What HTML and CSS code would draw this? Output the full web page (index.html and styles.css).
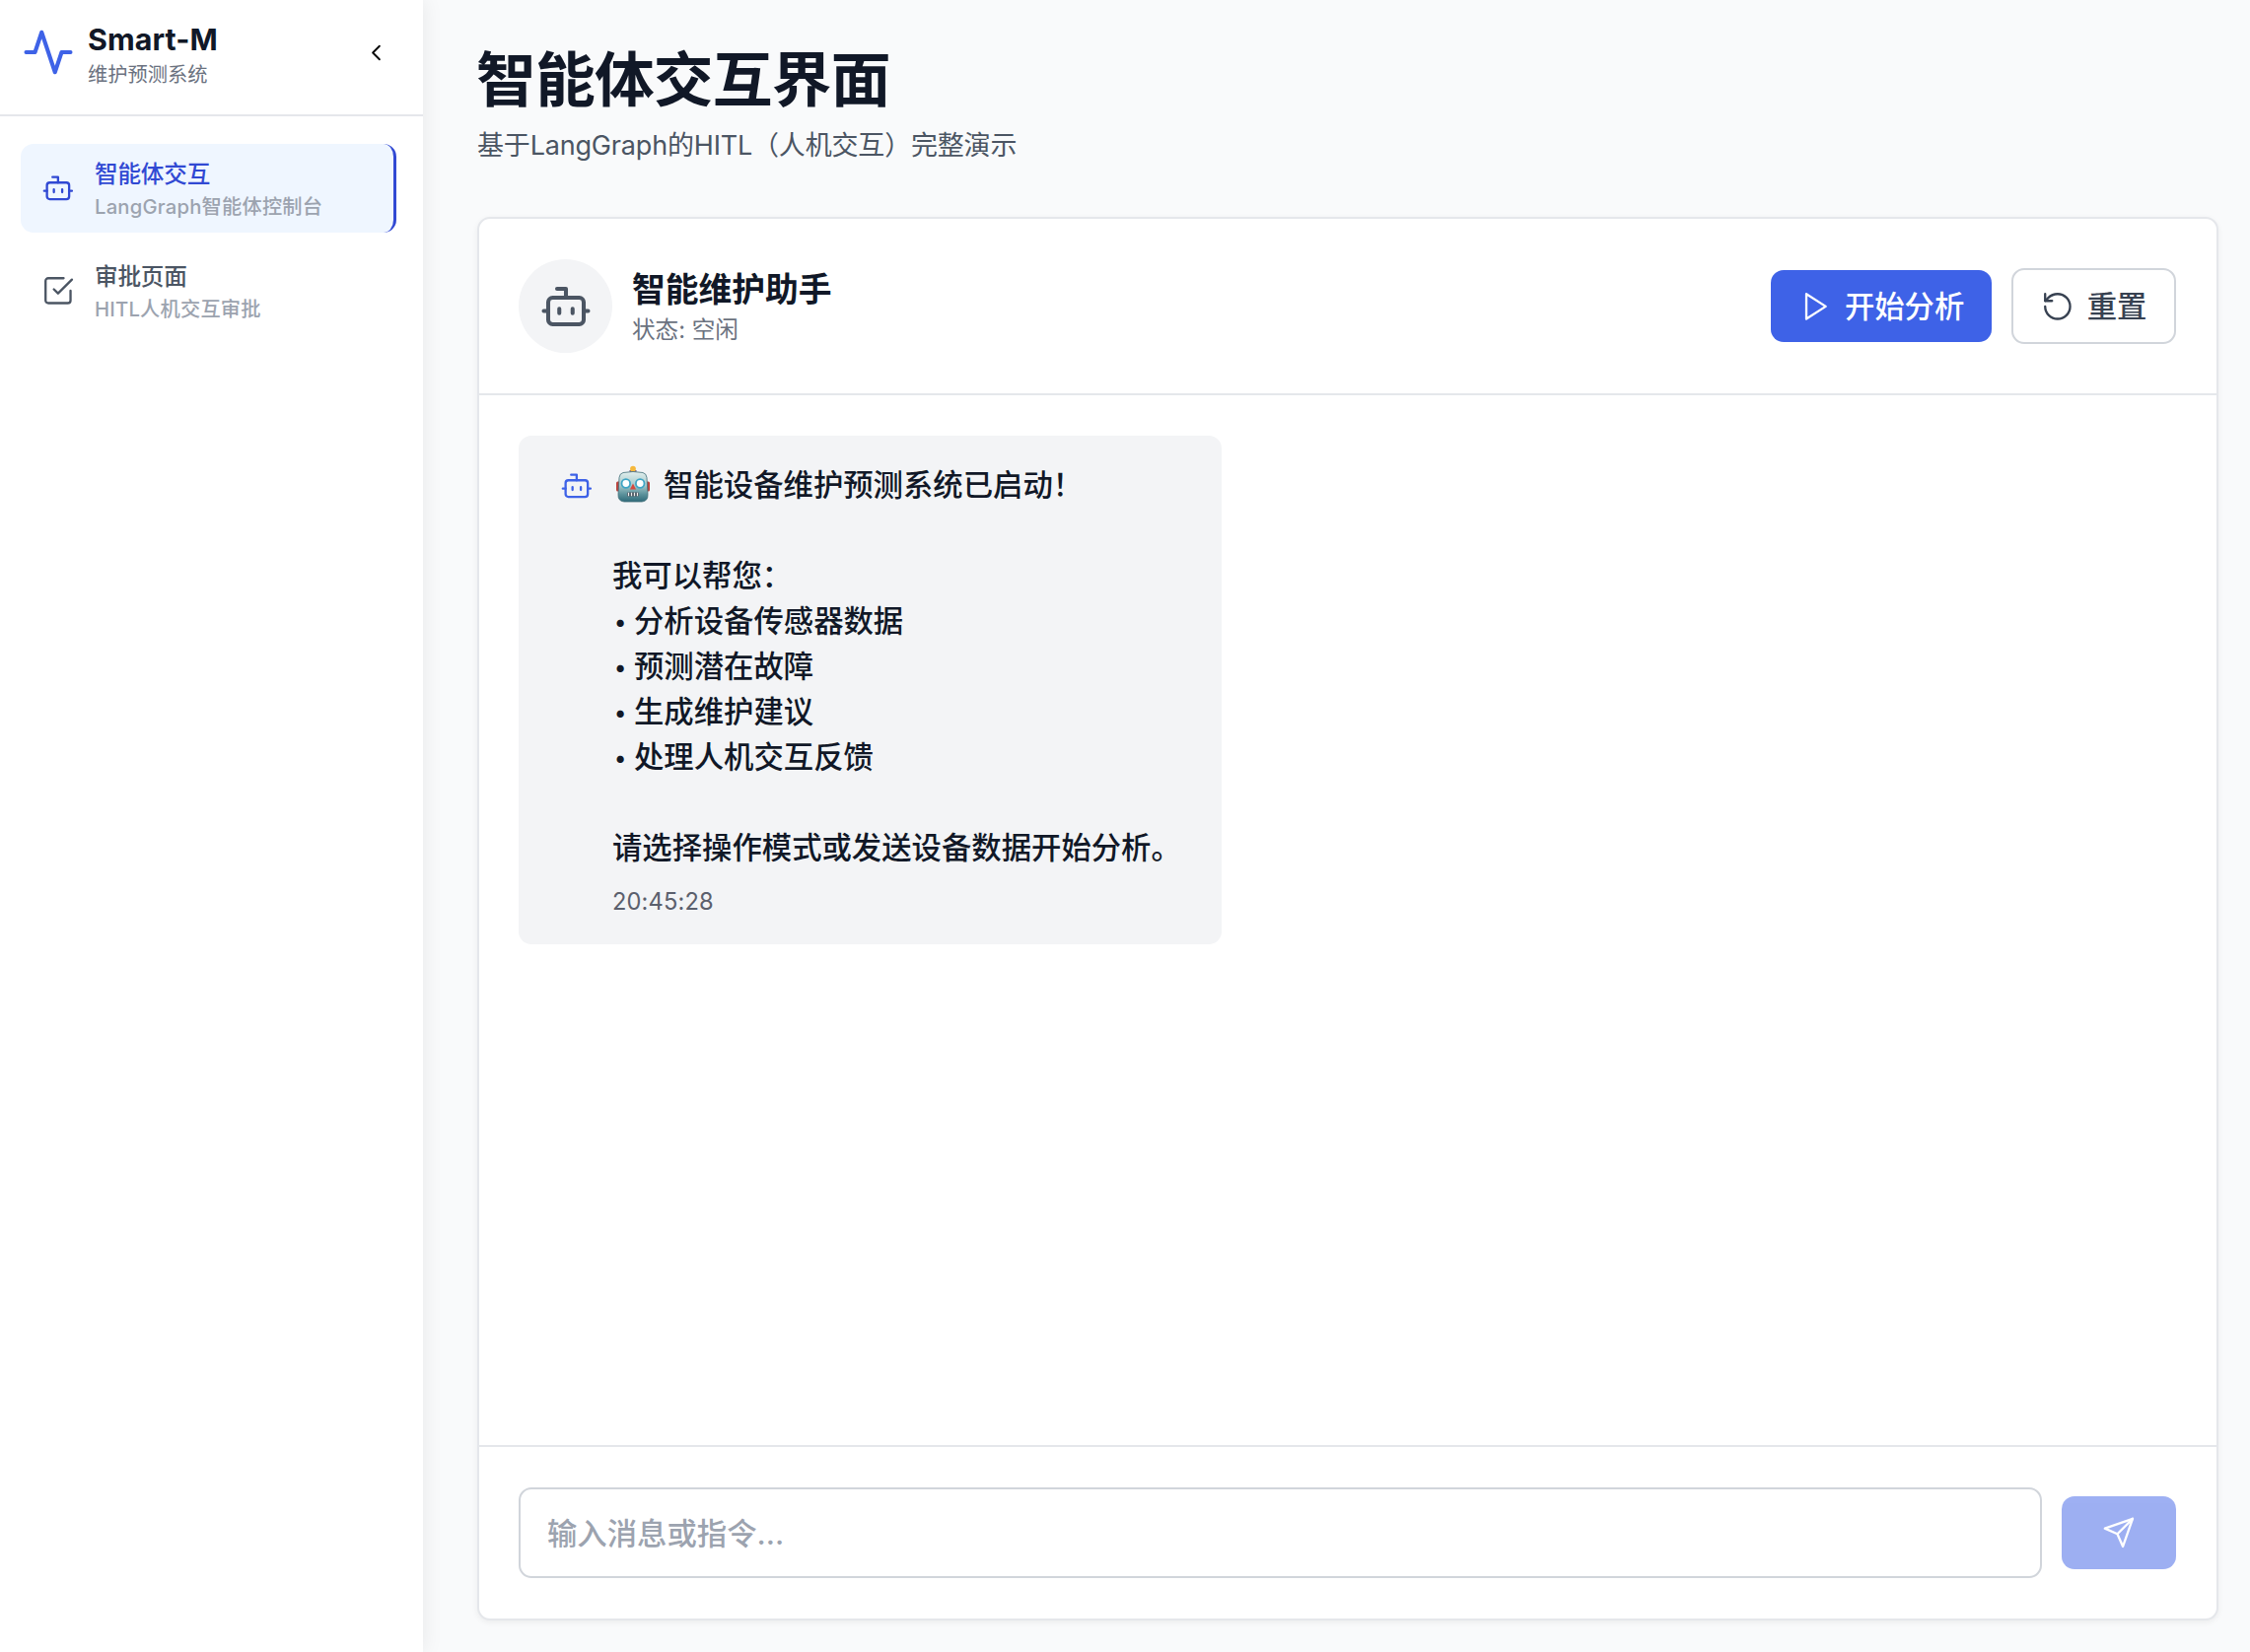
FILE: index.html
```html
<!DOCTYPE html>
<html lang="zh-CN">
<head>
  <meta charset="UTF-8">
  <meta name="viewport" content="width=device-width, initial-scale=1.0">
  <title>Smart-M 维护预测系统</title>
  <link rel="stylesheet" href="styles.css">
</head>
<body>
  <!-- shared icons -->
  <svg class="icon-defs" width="0" height="0">
    <symbol id="icon-bot" viewBox="0 0 24 24">
      <path d="M12 8V4H8"/>
      <rect x="4" y="8" width="16" height="12" rx="2"/>
      <path d="M2 14h2M20 14h2M15 13v2M9 13v2"/>
    </symbol>
  </svg>

  <aside class="sidebar">
    <div class="sidebar-header">
      <svg class="icon icon-lg logo" viewBox="0 0 24 24"><path d="M22 12h-4l-3 9L9 3l-3 9H2"/></svg>
      <div class="brand">
        <div class="brand-name">Smart-M</div>
        <div class="brand-desc">维护预测系统</div>
      </div>
      <button class="collapse-btn">
        <svg class="icon icon-sm" viewBox="0 0 24 24"><path d="M15 18l-6-6 6-6"/></svg>
      </button>
    </div>

    <nav>
      <a class="nav-item active">
        <svg class="icon"><use href="#icon-bot"/></svg>
        <div class="nav-text">
          <div class="nav-title">智能体交互</div>
          <div class="nav-desc">LangGraph智能体控制台</div>
        </div>
      </a>
      <a class="nav-item">
        <svg class="icon" viewBox="0 0 24 24">
          <path d="M9 11l3 3L22 4"/>
          <path d="M21 12v7a2 2 0 0 1-2 2H5a2 2 0 0 1-2-2V5a2 2 0 0 1 2-2h11"/>
        </svg>
        <div class="nav-text">
          <div class="nav-title">审批页面</div>
          <div class="nav-desc">HITL人机交互审批</div>
        </div>
      </a>
    </nav>
  </aside>

  <main>
    <h1>智能体交互界面</h1>
    <p class="subtitle">基于LangGraph的HITL（人机交互）完整演示</p>

    <section class="card">
      <div class="card-header">
        <div class="avatar">
          <svg class="icon icon-lg"><use href="#icon-bot"/></svg>
        </div>
        <div class="agent">
          <h2>智能维护助手</h2>
          <p>状态: 空闲</p>
        </div>
        <div class="actions">
          <button class="btn btn-primary">
            <svg class="icon" viewBox="0 0 24 24"><path d="M5 3l14 9-14 9z"/></svg>
            <span>开始分析</span>
          </button>
          <button class="btn btn-outline">
            <svg class="icon" viewBox="0 0 24 24">
              <path d="M3 12a9 9 0 1 0 9-9 9.75 9.75 0 0 0-6.74 2.74L3 8"/>
              <path d="M3 3v5h5"/>
            </svg>
            <span>重置</span>
          </button>
        </div>
      </div>

      <div class="messages">
        <div class="message">
          <svg class="icon message-icon"><use href="#icon-bot"/></svg>
          <div>
            <div class="message-text"><svg class="robot" viewBox="0 0 36 38">
                <defs>
                  <linearGradient id="face" x1="0" y1="0" x2="0" y2="1">
                    <stop offset="0" stop-color="#e3efee"/>
                    <stop offset="0.45" stop-color="#a5c9cb"/>
                    <stop offset="0.75" stop-color="#5c929c"/>
                    <stop offset="1" stop-color="#2f6a79"/>
                  </linearGradient>
                </defs>
                <rect x="1" y="16.5" width="4" height="10" rx="1.5" fill="#b9453f"/>
                <rect x="31" y="16.5" width="4" height="10" rx="1.5" fill="#b9453f"/>
                <path d="M14.5 5h7v2.500a3.500 2.500 0 0 1-7 0z" fill="#6a5182"/>
                <circle cx="18" cy="3.700" r="2.900" fill="#f5b83c"/>
                <path d="M8 7.500q10-2 20 0 3.500.8 4 5l1 17q.3 7-6 7.500H9q-6.300-.5-6-7.500l1-17q.5-4.200 4-5z" fill="url(#face)" stroke="#416f78" stroke-width=".8"/>
                <circle cx="10.800" cy="18.500" r="4.300" fill="#fff" stroke="#3fa5c5" stroke-width="1.800"/>
                <circle cx="25.200" cy="18.500" r="4.300" fill="#fff" stroke="#3fa5c5" stroke-width="1.800"/>
                <path d="M18 18.500l3 6h-6z" fill="#d5493f"/>
                <rect x="12" y="27.500" width="12" height="4" rx="1" fill="#424e59"/>
                <path d="M13.500 27.700v3.600M16.500 27.700v3.600M19.500 27.700v3.600M22.500 27.700v3.600" stroke="#eee" stroke-width="1.300"/>
              </svg> 智能设备维护预测系统已启动！

我可以帮您：
<span class="bullet">•</span>分析设备传感器数据
<span class="bullet">•</span>预测潜在故障
<span class="bullet">•</span>生成维护建议
<span class="bullet">•</span>处理人机交互反馈

请选择操作模式或发送设备数据开始分析。</div>
            <div class="message-time">20:45:28</div>
          </div>
        </div>
      </div>

      <div class="composer">
        <input type="text" placeholder="输入消息或指令...">
        <button class="btn btn-primary send-btn" disabled>
          <svg class="icon" viewBox="0 0 24 24">
            <path d="M22 2L11 13"/>
            <path d="M22 2l-7 20-4-9-9-4z"/>
          </svg>
        </button>
      </div>
    </section>
  </main>
</body>
</html>
```

FILE: styles.css
```css
* {
  box-sizing: border-box;
  margin: 0;
  padding: 0;
}

html {
  font-size: 27px;
}

body {
  display: flex;
  height: 100vh;
  overflow: hidden;
  font-family: Inter, "Noto Sans CJK SC", sans-serif;
  background-color: #f9fafb;
  color: #111827;
}

button,
input {
  font-family: inherit;
}

.icon-defs {
  display: none;
}

.icon {
  width: 1.25rem;
  height: 1.25rem;
  flex-shrink: 0;
  fill: none;
  stroke: currentColor;
  stroke-width: 1.65;
  stroke-linecap: round;
  stroke-linejoin: round;
}

.icon-sm {
  width: 1rem;
  height: 1rem;
}

.icon-lg {
  width: 2rem;
  height: 2rem;
  stroke-width: 1.8;
}

/* Sidebar */
.sidebar {
  width: 429px;
  flex-shrink: 0;
  background-color: #fff;
  box-shadow: 0 0 20px rgba(0, 0, 0, 0.08);
}

.sidebar-header {
  display: flex;
  align-items: center;
  height: 118px;
  padding: 0 34px 10px 22px;
  border-bottom: 2px solid #e5e7eb;
}

.logo {
  color: #3e62e7;
}

.brand {
  flex: 1;
  margin-left: 13px;
  padding-top: 8px;
}

.brand-name {
  font-size: 1.125rem;
  line-height: 38px;
  font-weight: 700;
  letter-spacing: 0.1px;
}

.brand-desc {
  font-size: 0.75rem;
  line-height: 34px;
  color: #6b7280;
}

.collapse-btn {
  display: flex;
  border: none;
  background: none;
  color: #000;
}

nav {
  display: flex;
  flex-direction: column;
  gap: 14px;
  padding: 28px 27px 0 21px;
}

.nav-item {
  display: flex;
  align-items: center;
  gap: 0.75rem;
  height: 90px;
  padding: 0 21px;
  border-radius: 13px;
  color: #4b5563;
}

.nav-item.active {
  background-color: #eff6ff;
  border-right: 3px solid #3149d3;
  color: #3149d3;
}

.nav-text {
  padding-top: 4px;
}

.nav-title {
  font-size: 0.875rem;
  line-height: 34px;
  font-weight: 500;
  letter-spacing: -0.2px;
}

.nav-desc {
  font-size: 0.75rem;
  line-height: 32px;
  font-weight: 500;
  letter-spacing: 0.2px;
  color: #9ca3af;
}

/* Main area */
main {
  flex: 1;
  display: flex;
  flex-direction: column;
  padding: 47px 32px 32px 55px;
}

h1 {
  margin-left: -1px;
  font-size: 2.25rem;
  line-height: 68px;
  font-weight: 700;
  letter-spacing: -0.8px;
}

.subtitle {
  margin-top: 13px;
  font-size: 1rem;
  line-height: 40px;
  letter-spacing: -0.18px;
  color: #4b5563;
}

.card {
  flex: 1;
  display: flex;
  flex-direction: column;
  margin-top: 52px;
  background-color: #fff;
  border: 2px solid #e5e7eb;
  border-radius: 13px;
  box-shadow: 0 2px 6px rgba(0, 0, 0, 0.06);
}

.card-header {
  display: flex;
  align-items: center;
  height: 179px;
  padding: 0 41px 0 40px;
  border-bottom: 2px solid #e5e7eb;
}

.avatar {
  display: flex;
  align-items: center;
  justify-content: center;
  width: 95px;
  height: 95px;
  border-radius: 50%;
  background-color: #f3f4f6;
  color: #4b5563;
}

.agent {
  margin-left: 20px;
  padding-top: 2px;
}

.agent h2 {
  font-size: 1.25rem;
  line-height: 46px;
  font-weight: 600;
}

.agent p {
  font-size: 0.875rem;
  line-height: 36px;
  color: #6b7280;
}

.actions {
  display: flex;
  align-items: center;
  gap: 0.75rem;
  margin-left: auto;
}

.btn {
  display: flex;
  align-items: center;
  justify-content: center;
  gap: 0.5rem;
  height: 73px;
  padding: 0 1rem;
  border: none;
  border-radius: 13px;
  font-size: 1.125rem;
  font-weight: 500;
}

.btn span {
  padding-bottom: 3px;
}

.btn-primary {
  width: 224px;
  background-color: #3e62e7;
  color: #fff;
}

.btn-primary:not(.send-btn) {
  gap: 12px;
  padding: 0 26px 0 28px;
}

.btn-outline {
  height: 77px;
  width: 167px;
  background-color: #fff;
  border: 2px solid #d1d5db;
  color: #374151;
}

/* Messages */
.messages {
  flex: 1;
  padding: 41px 40px;
}

.message {
  display: flex;
  gap: 0.75rem;
  width: 713px;
  height: 516px;
  padding: 27px 40px 0 41px;
  border-radius: 13px;
  background-color: #f3f4f6;
}

.message-icon {
  margin-top: 7px;
  margin-left: 1px;
  margin-right: -1px;
  color: #3e62e7;
}

.message-text {
  font-size: 1.125rem;
  line-height: 46px;
  font-weight: 500;
  white-space: pre;
}

.robot {
  width: 36px;
  height: 38px;
  margin-left: 3px;
  margin-right: 5px;
  vertical-align: -7px;
}

.bullet {
  display: inline-block;
  width: 22px;
  padding-left: 2px;
  font-size: 0.85rem;
  line-height: 24px;
  vertical-align: 2px;
}

.message-time {
  margin-top: 14px;
  font-size: 0.875rem;
  line-height: 36px;
  letter-spacing: 0.15px;
  color: #5b606d;
}

/* Input row */
.composer {
  display: flex;
  align-items: center;
  gap: 0.75rem;
  height: 176px;
  padding: 0 41px 0 40px;
  border-top: 2px solid #e5e7eb;
}

.composer input {
  flex: 1;
  height: 92px;
  padding: 2px 1rem 0;
  border: 2px solid #d1d5db;
  border-radius: 13px;
  font-size: 1.125rem;
  font-weight: 500;
  outline: none;
}

.composer input::placeholder {
  color: #9ca3af;
}

.send-btn {
  width: 116px;
  height: 74px;
}

.btn:disabled {
  opacity: 0.5;
}
```
